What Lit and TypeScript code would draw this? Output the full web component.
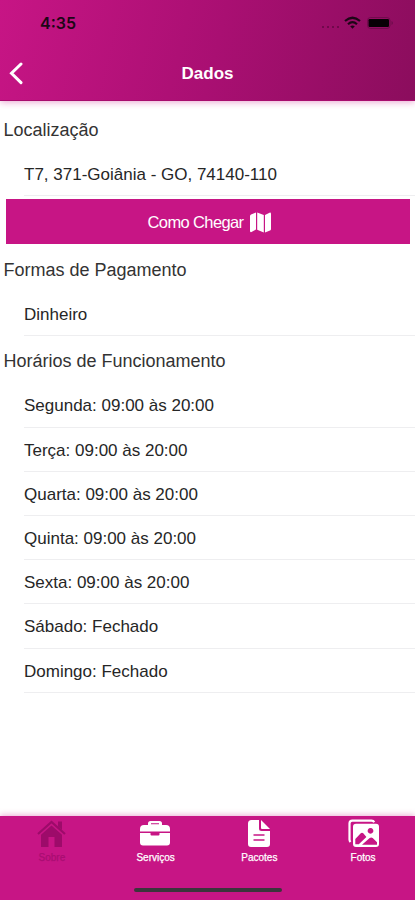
import { LitElement, html, css, svg } from "lit";
import { customElement } from "lit/decorators.js";

const hours = [
  "Segunda: 09:00 às 20:00",
  "Terça: 09:00 às 20:00",
  "Quarta: 09:00 às 20:00",
  "Quinta: 09:00 às 20:00",
  "Sexta: 09:00 às 20:00",
  "Sábado: Fechado",
  "Domingo: Fechado",
];

const icons = {
  home: svg`<path d="M2 15 15.500 3 29 15" fill="none" stroke="currentColor" stroke-width="2.2"/><path d="M22 2.500h4v8.500l-4-3.600zM15.500 6.500 5 15.700V28H12.500V18h6v10h7.500V15.700z"/>`,
  bag: svg`<path fill-rule="evenodd" d="M8 6V4.500Q8 2 10.500 2h9Q22 2 22 4.500V6h4q4 0 4 4v2.500H0V10q0-4 4-4zm3-.8h8V4.300h-8zM0 14h10.500v1.500q0 1 1 1h7q1 0 1-1V14H30V23.500q0 3-3 3H3q-3 0-3-3z"/>`,
  doc: svg`<path fill-rule="evenodd" d="M7.500 1H15v8.500q0 2.500 2.500 2.500H26v13q0 3-3 3H7q-3 0-3-3V4.500Q4 1 7.500 1zM9.500 15.200v1.600h11v-1.600zm0 5v1.600h11v-1.600z"/><path d="M17 1 26 10h-8q-1 0-1-1z"/>`,
  photos: svg`<path d="M2.500 23Q1.500 22 1.500 20.500V4.500Q1.500 1.700 4.300 1.700H23.500q2 0 2.700 1.500" fill="none" stroke="currentColor" stroke-width="2.200"/><path fill-rule="evenodd" d="M8 4.800h20q3 0 3 3V25q0 3-3 3H8q-3 0-3-3V7.800q0-3 3-3zM22.500 9a2.900 2.900 0 1 0 .01 0zM7.300 25.300h3.500l7.600-7.400-2.900-3.300q-1.500-1.500-3 0l-5.200 5.300zM14 25.700H29v-2.500l-4.300-4.200q-1.500-1.200-3 0z"/>`,
};

const tabs = [
  { label: "Sobre", icon: icons.home, off: true },
  { label: "Serviços", icon: icons.bag, off: false },
  { label: "Pacotes", icon: icons.doc, off: false },
  { label: "Fotos", icon: icons.photos, off: false },
];

@customElement("app-root")
export class AppRoot extends LitElement {
  static styles = css`
    :host {
      display: flex;
      flex-direction: column;
      height: 900px;
      background: #fff;
      color: #262626;
      font-family: "Liberation Sans", Arial, sans-serif;
      overflow: hidden;
    }
    * { box-sizing: border-box; }
    header {
      height: 101px;
      flex: none;
      background: linear-gradient(104deg, #c71585 0%, #a90f72 52%, #8b0d5d 100%);
      border-bottom: 1px solid #a80c6e;
      box-shadow: 0 1px 7px rgba(199, 21, 133, 0.4);
    }
    .status {
      display: flex;
      align-items: center;
      height: 47px;
      padding: 0 21px 0 40px;
      color: #1d0616;
    }
    .time {
      flex: 1;
      margin-top: -2px;
      font: 600 16px "Inter", sans-serif;
      letter-spacing: 0;
    }
    .dots {
      display: flex;
      gap: 2.500px;
      margin: 7px 5px 0 0;
    }
    .dots i {
      width: 2.500px;
      height: 2.500px;
      border-radius: 50%;
      background: rgba(45, 0, 30, 0.5);
    }
    .wifi { width: 17px; height: 13px; margin: -2px 6px 0 0; }
    .battery { width: 27px; height: 12px; margin-top: -1px; }
    .nav {
      display: grid;
      grid-template-columns: 40px 1fr 40px;
      align-items: center;
      height: 53px;
      color: #fff;
    }
    .back { width: 14px; height: 24px; margin: -2px 0 0 9px; }
    h1 {
      margin: 0;
      font-size: 17px;
      line-height: 20px;
      text-align: center;
    }
    main { flex: 1; }
    h2 {
      margin: 0;
      height: 47px;
      padding: 15px 0 0 3.500px;
      font-size: 18px;
      line-height: 20px;
      font-weight: 400;
      color: #333;
    }
    .first { height: 51px; padding-top: 19px; }
    .action + h2 { height: 48px; padding-top: 16px; }
    .row {
      height: 44.200px;
      margin-left: 24px;
      padding-top: 13px;
      border-bottom: 1px solid #eeeef0;
      font-size: 17px;
      line-height: 20px;
    }
    .action {
      display: flex;
      align-items: center;
      justify-content: center;
      gap: 7px;
      width: 404px;
      height: 45px;
      margin: 3px 5px 0 6px;
      padding: 1px 0 0 3px;
      border: 0;
      background: #c71585;
      color: #fff;
      font: 16.500px "Liberation Sans", Arial, sans-serif;
      letter-spacing: -0.620px;
    }
    .map { width: 21px; height: 21px; }
    footer {
      height: 84px;
      flex: none;
      background: #c71585;
      box-shadow: 0 -1px 6px rgba(199, 21, 133, 0.350);
    }
    .tabs {
      display: grid;
      grid-template-columns: repeat(4, 1fr);
      height: 72px;
      color: #fff;
    }
    .tab {
      display: flex;
      flex-direction: column;
      align-items: center;
      padding-top: 3px;
      font-size: 10px;
      line-height: 12px;
      -webkit-text-stroke: 0.250px currentColor;
    }
    .tab svg { width: 31px; height: 29px; margin-bottom: 4px; overflow: visible; }
    .off { color: #9d0b6a; }
    .off span { opacity: 0.7; }
    .indicator {
      width: 148px;
      height: 4px;
      margin: 0 auto;
      border-radius: 2px;
      background: #3b353b;
    }
  `;

  render() {
    return html`
      <header>
        <div class="status">
          <span class="time">4:35</span>
          <span class="dots"><i></i><i></i><i></i><i></i></span>
          <svg class="wifi" viewBox="0 0 17 13" fill="none" stroke="currentColor" stroke-width="2.200">
            <path d="M1 5Q8.500-1.500 16 5M4 8.200q4.500-4 9 0" /><path d="m6.200 10.300q2.300-1.600 4.600 0L8.500 12.700z" fill="currentColor" stroke="none" />
          </svg>
          <svg class="battery" viewBox="0 0 27 12">
            <rect x=".5" y=".5" width="22.500" height="11" rx="3" fill="none" stroke="#5c0b40" stroke-opacity=".6" />
            <rect x="1.500" y="2" width="20.500" height="8" rx="1.200" fill="#080006" />
            <path d="M24.500 4v4q1.500-.6 1.500-2t-1.500-2" fill="#5c0b40" fill-opacity=".6" />
          </svg>
        </div>
        <div class="nav">
          <svg class="back" viewBox="0 0 14 24" fill="none" stroke="currentColor" stroke-width="3" stroke-linecap="round">
            <path d="M12 3 2.500 12.300 12 21.600" />
          </svg>
          <h1>Dados</h1>
        </div>
      </header>
      <main>
        <h2 class="first">Localização</h2>
        <div class="row">T7, 371-Goiânia - GO, 74140-110</div>
        <button class="action">
          <span>Como Chegar</span>
          <svg class="map" viewBox="0 0 21 21" fill="currentColor">
            <path d="M0 4Q0 3 1 2.500L6 .5v17L1.500 20Q0 20.500 0 19zM7.200.5l6.600 2.500v17.500l-6.600-2.800zM15 3l4.500-2.300Q21 .2 21 2v15q0 1-1 1.500l-5 2z" />
          </svg>
        </button>
        <h2>Formas de Pagamento</h2>
        <div class="row">Dinheiro</div>
        <h2>Horários de Funcionamento</h2>
        ${hours.map((h) => html`<div class="row">${h}</div>`)}
      </main>
      <footer>
        <div class="tabs">
          ${tabs.map(
            (t) => html`<div class="tab ${t.off ? "off" : ""}">
              <svg viewBox="0 0 31 29" fill="currentColor">${t.icon}</svg>
              <span>${t.label}</span>
            </div>`
          )}
        </div>
        <div class="indicator"></div>
      </footer>
    `;
  }
}
